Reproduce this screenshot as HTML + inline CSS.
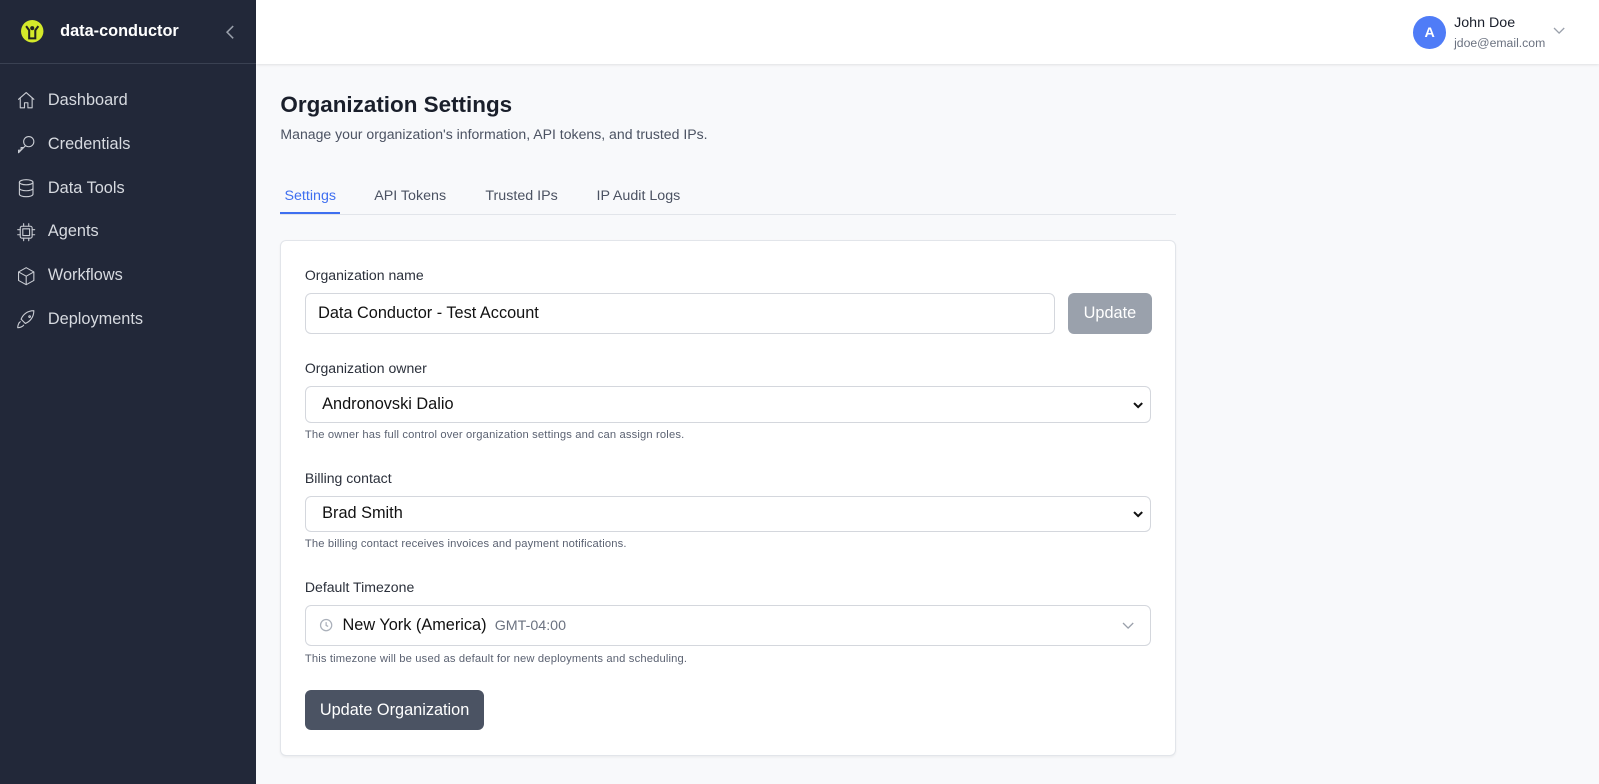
<!DOCTYPE html>
<html><head><meta charset="utf-8"><style>
*{box-sizing:border-box;margin:0;padding:0}
html,body{width:1599px;height:784px;overflow:hidden;background:#f8f9fb;font-family:"Liberation Sans",sans-serif}
#w{zoom:1.0197;width:1568px;height:769px;position:relative}
.sb{position:absolute;left:0;top:0;width:251px;height:769px;background:#222839;color:#d7dae0}
.logo{height:63px;border-bottom:1px solid #3a4152;display:flex;align-items:center;padding-left:20px}
.logo b{color:#fff;font-size:16px;margin-left:15px}
.nav{padding-top:14px}
.nav div{height:43px;display:flex;align-items:center;padding-left:16px;font-size:16px;color:#d7dae0}
.nav svg{width:20px;height:20px;margin-right:11px;stroke:#c9ccd3;fill:none;stroke-width:1.3;stroke-linecap:round;stroke-linejoin:round}
.hd{position:absolute;left:251px;top:0;right:0;height:63px;background:#fff;box-shadow:0 1px 3px rgba(0,0,0,.12)}
.mn{position:absolute;left:275px;top:0}
h1{position:absolute;top:90px;font-size:22px;color:#1a1f2b;white-space:nowrap}
.sub{position:absolute;top:124px;font-size:13.8px;color:#4b5262;white-space:nowrap}
.tabs{position:absolute;top:180px;width:878px;height:31px;border-bottom:1px solid #e2e5ea;font-size:14px;color:#4b5262}
.tabs span{position:absolute;top:4px}
.card{position:absolute;top:235px;left:275px;width:878px;height:506px;background:#fff;border:1px solid #e2e5ea;border-radius:6px;box-shadow:0 1px 2px rgba(0,0,0,.05)}
.lbl{position:absolute;left:23px;font-size:13.8px;color:#2b303b}
.in{position:absolute;left:23px;border:1px solid #d4d7dd;border-radius:6px;font-size:16px;color:#111;display:flex;align-items:center}
.hint{position:absolute;left:23px;font-size:11px;color:#5b6272;letter-spacing:.15px}
.chev{position:absolute;right:6px;top:50%;margin-top:-4px}
</style></head><body><div id="w">
<div class="sb">
 <div class="logo"><svg width="24" height="24" viewBox="0 0 24 24"><circle cx="12" cy="12" r="11" fill="#d4e92a"/><path d="M6 7l3 4v8h6v-8l3-4" stroke="#222" stroke-width="2" fill="none"/><circle cx="12" cy="9" r="2" fill="#222"/></svg><b>data-conductor</b>
 <svg style="position:absolute;left:220px;top:24px" width="12" height="16" viewBox="0 0 12 16"><path d="M9 2L3 8l6 6" stroke="#9aa0ab" stroke-width="1.5" fill="none"/></svg></div>
 <div class="nav">
  <div><svg viewBox="0 0 24 24"><path d="M3 11l9-8 9 8M5 9v12h5v-6h4v6h5V9"/></svg>Dashboard</div>
  <div><svg viewBox="0 0 24 24"><circle cx="15" cy="9" r="6"/><path d="M11 14l-8 8v-3h3v-3h3"/></svg>Credentials</div>
  <div><svg viewBox="0 0 24 24"><ellipse cx="12" cy="5" rx="8" ry="3"/><path d="M4 5v14c0 1.7 3.6 3 8 3s8-1.3 8-3V5M4 12c0 1.7 3.6 3 8 3s8-1.3 8-3"/></svg>Data Tools</div>
  <div><svg viewBox="0 0 24 24"><rect x="5" y="5" width="14" height="14" rx="2"/><rect x="8" y="8" width="8" height="8"/><path d="M9 2v3M15 2v3M9 19v3M15 19v3M2 9h3M2 15h3M19 9h3M19 15h3"/></svg>Agents</div>
  <div><svg viewBox="0 0 24 24"><path d="M12 2l9 5v10l-9 5-9-5V7zM3 7l9 5 9-5M12 12v10"/></svg>Workflows</div>
  <div><svg viewBox="0 0 24 24"><path d="M5 15c-2 1-3 5-3 7 2 0 6-1 7-3M9 15l-3-3c2-5 7-10 15-10 0 8-5 13-10 15zM15 9a1 1 0 1 0 0-.1"/></svg>Deployments</div>
 </div>
</div>
<div class="hd">
 <div style="position:absolute;left:1135px;top:16px;width:32px;height:32px;border-radius:50%;background:#4f7cf7;color:#fff;font-size:14px;font-weight:bold;display:flex;align-items:center;justify-content:center">A</div>
 <div style="position:absolute;left:1175px;top:15px;font-size:14px;color:#1a1f2b">John Doe</div>
 <div style="position:absolute;left:1175px;top:35px;font-size:12px;color:#6b7280">jdoe@email.com</div>
 <svg style="position:absolute;left:1272px;top:26px" width="12" height="8" viewBox="0 0 12 8"><path d="M1 1l5 5 5-5" stroke="#9aa0ab" stroke-width="1.3" fill="none"/></svg>
</div>
<div class="mn">
 <h1>Organization Settings</h1>
 <div class="sub">Manage your organization's information, API tokens, and trusted IPs.</div>
 <div class="tabs">
  <span style="left:4px;color:#3f6ff0">Settings</span>
  <div style="position:absolute;left:0;top:28px;width:58px;height:2px;background:#3f6ff0"></div>
  <span style="left:92px">API Tokens</span><span style="left:201px">Trusted IPs</span><span style="left:310px">IP Audit Logs</span>
 </div>
</div>
<div class="card">
 <div class="lbl" style="top:26px">Organization name</div>
 <div class="in" style="top:51px;width:736px;height:41px;padding-left:12px">Data Conductor - Test Account</div>
 <div style="position:absolute;left:771px;top:51px;width:83px;height:41px;border-radius:6px;background:#9aa1ac;color:#fff;font-size:16px;display:flex;align-items:center;justify-content:center">Update</div>
 <div class="lbl" style="top:117px">Organization owner</div>
 <div class="in" style="top:143px;width:830px;height:36px;padding-left:16px">Andronovski Dalio<svg class="chev" width="12" height="8" viewBox="0 0 12 8"><path d="M2 2l4 4 4-4" stroke="#111" stroke-width="2" fill="none"/></svg></div>
 <div class="hint" style="top:185px">The owner has full control over organization settings and can assign roles.</div>
 <div class="lbl" style="top:225px">Billing contact</div>
 <div class="in" style="top:250px;width:830px;height:36px;padding-left:16px">Brad Smith<svg class="chev" width="12" height="8" viewBox="0 0 12 8"><path d="M2 2l4 4 4-4" stroke="#111" stroke-width="2" fill="none"/></svg></div>
 <div class="hint" style="top:292px">The billing contact receives invoices and payment notifications.</div>
 <div class="lbl" style="top:332px">Default Timezone</div>
 <div class="in" style="top:357px;width:830px;height:41px;padding-left:13px"><svg width="14" height="14" viewBox="0 0 14 14" style="margin-right:9px"><circle cx="7" cy="7" r="5.5" stroke="#aab0ba" stroke-width="1.2" fill="none"/><path d="M7 4v3.3l2 1" stroke="#aab0ba" stroke-width="1.2" fill="none"/></svg>New York (America)<span style="font-size:14px;color:#6b7280;margin-left:8px">GMT-04:00</span>
 <svg style="position:absolute;right:16px;top:16px" width="12" height="8" viewBox="0 0 12 8"><path d="M1 1l5 5 5-5" stroke="#9aa0ab" stroke-width="1.3" fill="none"/></svg></div>
 <div class="hint" style="top:404px">This timezone will be used as default for new deployments and scheduling.</div>
 <div style="position:absolute;left:23px;top:441px;width:176px;height:39px;border-radius:6px;background:#4b5363;color:#fff;font-size:16px;display:flex;align-items:center;justify-content:center">Update Organization</div>
</div>
</div></body></html>
